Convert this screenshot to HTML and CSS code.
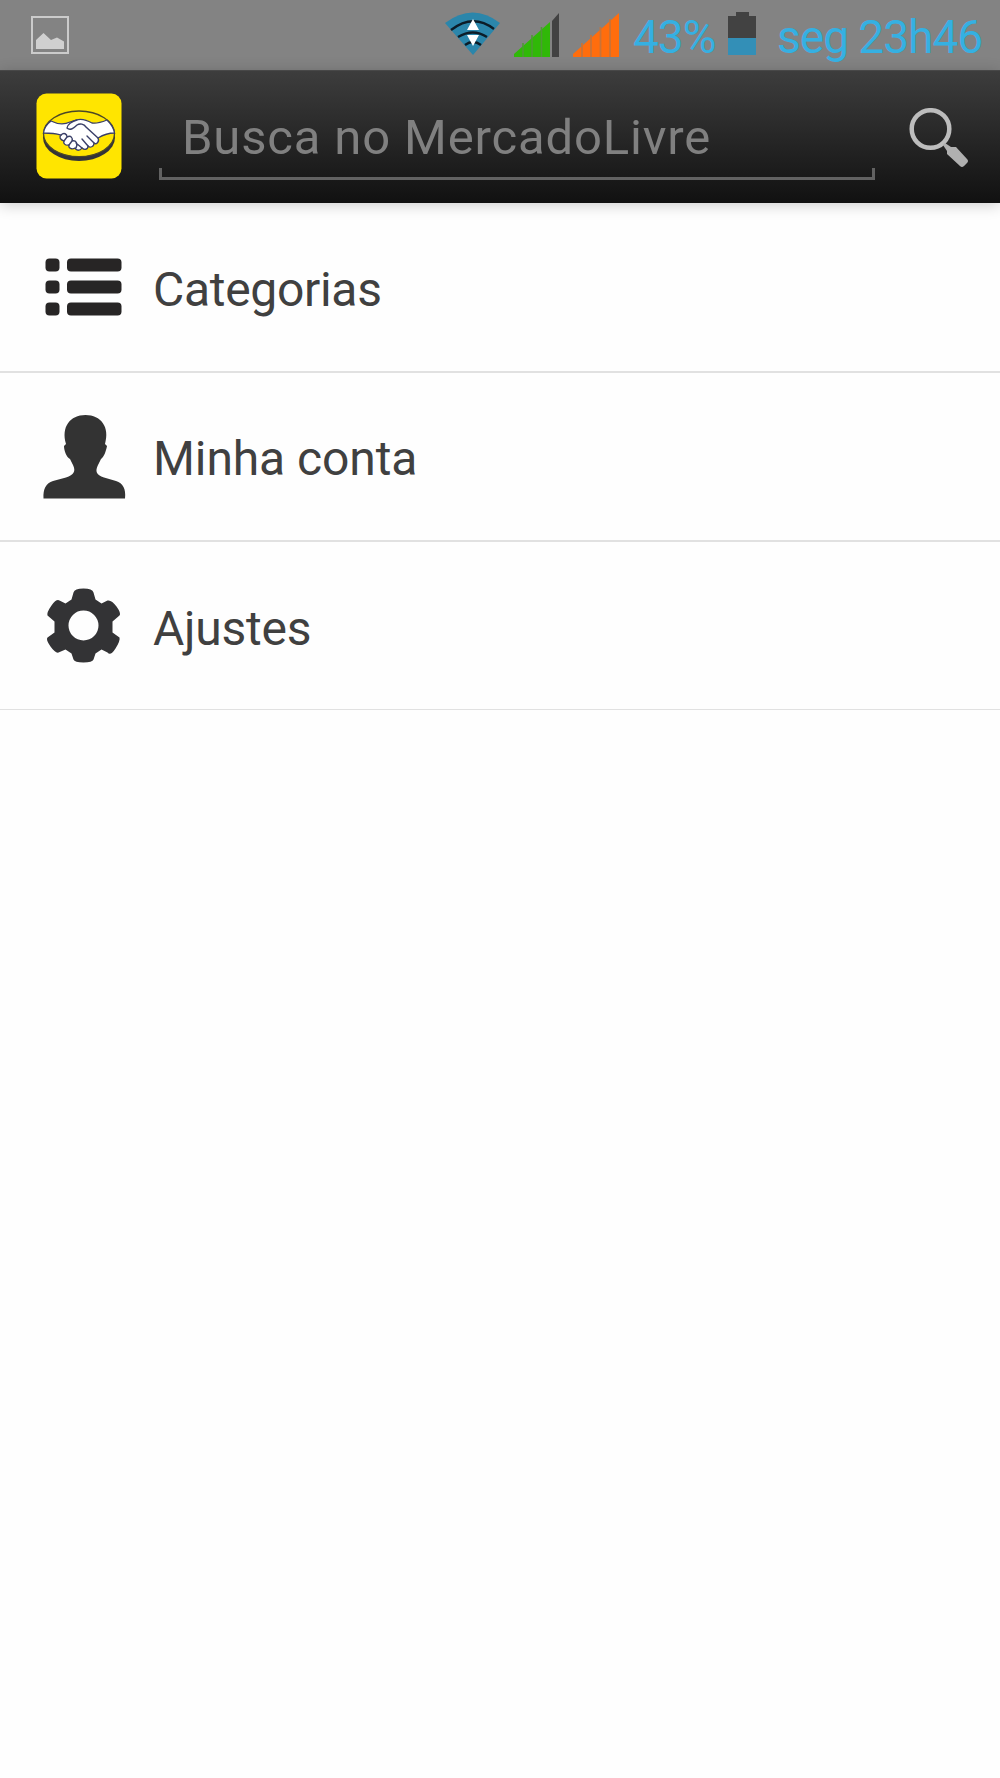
FILE: index.html
```html
<!DOCTYPE html>
<html lang="pt-BR">
<head>
<meta charset="utf-8">
<title>MercadoLivre</title>
<link rel="stylesheet" href="styles.css">
</head>
<body>
<div class="status">
  <svg class="shot" width="38" height="38" viewBox="0 0 38 38"><rect x="1" y="1" width="36" height="36" fill="none" stroke="#cbcbcb" stroke-width="2"/><path d="M5 33V24l7.500-7 7.500 7 6-2.500 7 4V33z" fill="#d0d0d0"/></svg>
  <svg class="wifi" width="56" height="44" viewBox="0 0 56 44"><path d="M0 11Q28-10 55 11L28 43z" fill="#2b86ab"/><g fill="none" stroke="#0c1c27" stroke-width="2.400"><path d="M6 18Q28 1 49 17"/><path d="M13 25Q28 16 42 25"/><path d="M20 33Q28 27 36 33"/></g><path d="M28 7l6 11H22zM22 23h12l-6 11z" fill="#fff"/></svg>
  <svg class="signal" width="46" height="44" viewBox="0 0 46 44"><path d="M0 44V41L36 9V44z" fill="#30b808"/><path d="M38 8L45 0V44H38z" fill="#424242"/><path d="M9 30v14M18 22v22M27.500 14v30" stroke="#4d9a35" stroke-width="1.600"/></svg>
  <svg class="signal-alt" width="48" height="44" viewBox="0 0 48 44"><path d="M1 44V41L47 0V44z" fill="#ff6d0d"/><path d="M10 30v14M19 22v22M28.500 14v30M38 6v38" stroke="#c87338" stroke-width="1.800"/></svg>
  <span class="percent">43%</span>
  <svg class="battery" width="29" height="43" viewBox="0 0 29 43"><path d="M0 4H8V0H21V4H28V26H0z" fill="#424242"/><path d="M0 26H28V43H0z" fill="#338fb7"/></svg>
  <span class="clock">seg 23h46</span>
</div>
<header class="bar">
  <svg class="logo" width="86" height="86" viewBox="0 0 86 86"><rect x=".5" y=".5" width="85" height="85" rx="10" fill="#ffe500"/>
    <ellipse cx="43" cy="44.500" rx="36" ry="23.500" fill="#333338"/>
    <ellipse cx="43" cy="40.800" rx="35.500" ry="22.800" fill="#ffe500" stroke="#4c4826" stroke-width="1.300"/>
    <path d="M15 28C21 31 28 32 34 29L40 27C46 25 51 27 56 30C61 31 66 29 71 27C75 31 78 36 78.500 40C72 40 67 42 62 45C64 49 60 52 58 50C58 54 54 55 52 53C52 57 48 57 46 55C44 58 40 58 39 55C36 57 32 55 33 52C29 53 27 50 28 48C24 47 23 44 25 42C18 40 13 40 7.500 40C8 36 11 31 15 28z" fill="#fff" stroke="#3a3f68" stroke-width="1.300"/>
    <path d="M41 27C36 28 31 32 31 35C34 38 38 35 41 32C44 30 48 31 50 34L62 45M51 43l7 7M46 46l6 7M40 50l6 5M25 42c3-3 6-1 6 2 4-2 6 1 5 4 4-1 6 2 4 7M31 44l-3 4M36 48l-3 4" fill="none" stroke="#3a3f68" stroke-width="1.400" stroke-linecap="round"/></svg>
  <div class="search"><span class="hint">Busca no MercadoLivre</span></div>
  <svg class="glass" width="60" height="60" viewBox="0 0 60 60"><circle cx="21.500" cy="21" r="18.800" fill="none" stroke="#bdbdbd" stroke-width="4.500"/><path d="M34 37l2-2 6 4 5 0 11 12q2 2 0 4l-3 3q-2 2-4 0L38 46V43z" fill="#b0b0b0"/></svg>
</header>
<ul class="menu">
  <li class="item">
    <svg class="icon" width="86" height="86" viewBox="0 0 86 86"><g fill="#272525"><rect x="3.500" y="14.500" width="14" height="13" rx="4"/><rect x="25" y="14.500" width="54.500" height="13" rx="4"/><rect x="3.500" y="36.500" width="14" height="13" rx="4"/><rect x="25" y="36.500" width="54.500" height="13" rx="4"/><rect x="3.500" y="58.500" width="14" height="13" rx="4"/><rect x="25" y="58.500" width="54.500" height="13" rx="4"/></g></svg>
    <span class="label categories">Categorias</span>
  </li>
  <li class="item">
    <svg class="icon" width="86" height="86" viewBox="0 0 86 86"><path d="M1.500 84.500C1 75 4 69 11 67L24 63.500C32 61 34 57 31 51L28 45C24 43 22 36 22 32L24 30C19 13 28 1 43.500 1S68 13 63 30L65 32C64 37 62 43 59 45L56 51C53 57 54 61 62 63.500L74 67C81 69 84 75 83 84.500z" fill="#333"/></svg>
    <span class="label account">Minha conta</span>
  </li>
  <li class="item">
    <svg class="icon" width="86" height="86" viewBox="0 0 86 86"><path transform="translate(-.5 1.500)" fill-rule="evenodd" d="M32 8Q33 4 42 4T52 8L54 15 60 19 66 16Q70 15 75 22T78 31L71 37V48L78 53Q79 56 74 64T66 68L60 65 54 69 52 75Q51 78 42 78T32 75L30 69 24 65 17 68Q14 69 9 62T6 53L13 48V37L6 31Q5 28 10 21T18 16L24 19 30 15zM42 26A15 15 0 1 0 42 56A15 15 0 1 0 42 26z" fill="#333335"/></svg>
    <span class="label settings">Ajustes</span>
  </li>
</ul>
</body>
</html>
```
FILE: styles.css
```css
* { box-sizing: border-box; }
body { margin: 0; min-height: 1778px; background: #fefefe; font-family: Roboto, sans-serif; }
svg { display: block; flex: none; }
span { white-space: nowrap; }

.status { display: flex; height: 70px; align-items: flex-start; background: #838383; color: #35b0e2; font-size: 46px; line-height: 54px; }
.shot { margin: 16px 0 0 31px; }
.wifi { margin: 12px 0 0 376px; }
.signal { margin: 13px 0 0 13px; }
.signal-alt { margin: 13px 0 0 12px; }
.percent { width: 95px; margin: 10px 0 0 13px; letter-spacing: -1px; }
.battery { margin-top: 12px; }
.clock { margin: 10px 0 0 20px; letter-spacing: -1px; }

.bar { display: flex; height: 133px; padding-left: 36px; background: linear-gradient(#3d3d3d, #111); border-top: 1px solid #484848; box-shadow: 0 2px 14px rgba(0, 0, 0, .2); }
.logo { margin-top: 22px; }
.search { position: relative; width: 716px; height: 109px; margin-left: 37px; padding: 37px 0 0 23px; border-bottom: 3px solid #626262; }
.search::before, .search::after { content: ""; position: absolute; bottom: 0; width: 3px; height: 9px; background: #626262; }
.search::before { left: 0; }
.search::after { right: 0; }
.hint { display: block; color: #808080; font-size: 49px; line-height: 60px; letter-spacing: .84px; }
.glass { margin: 37px 0 0 34px; }

.menu { margin: 0; padding: 0; list-style: none; }
.item { display: flex; height: 169.500px; padding: 41px 0 0 42px; border-bottom: 2px solid #e1e1e1; }
.item:last-child { height: 168px; border-bottom-width: 1px; }
.label { margin: 15px 0 0 25px; color: #404040; font-size: 48px; line-height: 60px; }
.categories { margin-top: 16px; letter-spacing: -.3px; }
.account { letter-spacing: -.1px; }
.settings { margin-top: 16px; letter-spacing: -.25px; }
```
